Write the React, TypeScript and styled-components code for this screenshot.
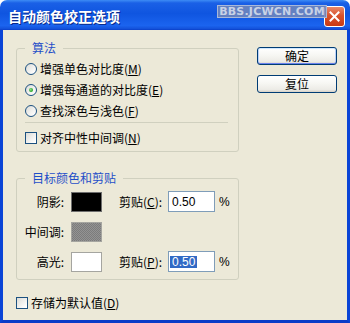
import styled, { createGlobalStyle } from "styled-components";

const GlobalStyle = createGlobalStyle`
  html, body {
    margin: 0;
    padding: 0;
    background: #ffffff;
  }
  body {
    font-family: "Noto Sans CJK SC", "Liberation Sans", sans-serif;
    font-size: 12px;
    color: #000;
  }
`;

export default function App(): JSX.Element {
  return (
    <>
      <GlobalStyle />
      <Window>
        <TitleBar>
          <Title>自动颜色校正选项</Title>
          <CloseButton>
            <svg width="11" height="11" viewBox="0 0 11 11">
              <path d="M1.5 1.5 L9.5 9.5 M9.5 1.5 L1.5 9.5" stroke="#fff" strokeWidth="2" strokeLinecap="square" />
            </svg>
          </CloseButton>
          <Watermark>BBS.JCWCN.COM</Watermark>
        </TitleBar>
        <Body>
          <Main>
            <LeftColumn>
              <AlgoGroup>
                <Legend>算法</Legend>
                <OptionRow>
                  <Radio $checked={false} />
                  <span>
                    增强单色对比度(<Key>M</Key>)
                  </span>
                </OptionRow>
                <OptionRow>
                  <Radio $checked />
                  <span>
                    增强每通道的对比度(<Key>E</Key>)
                  </span>
                </OptionRow>
                <OptionRow>
                  <Radio $checked={false} />
                  <span>
                    查找深色与浅色(<Key>F</Key>)
                  </span>
                </OptionRow>
                <Separator />
                <CheckRow>
                  <CheckBox />
                  <span>
                    对齐中性中间调(<Key>N</Key>)
                  </span>
                </CheckRow>
              </AlgoGroup>
              <TargetGroup>
                <Legend>目标颜色和剪贴</Legend>
                <SwatchRow>
                  <SwatchLabel>阴影:</SwatchLabel>
                  <Swatch $tone="dark" />
                  <ClipLabel>
                    剪贴(<Key>C</Key>):
                  </ClipLabel>
                  <NumberField>
                    <FieldText>0.50</FieldText>
                  </NumberField>
                  <Percent>%</Percent>
                </SwatchRow>
                <SwatchRow>
                  <SwatchLabel>中间调:</SwatchLabel>
                  <Swatch $tone="mid" />
                </SwatchRow>
                <SwatchRow>
                  <SwatchLabel>高光:</SwatchLabel>
                  <Swatch $tone="light" />
                  <ClipLabel>
                    剪贴(<Key>P</Key>):
                  </ClipLabel>
                  <NumberField>
                    <FieldText $selected>0.50</FieldText>
                  </NumberField>
                  <Percent>%</Percent>
                </SwatchRow>
              </TargetGroup>
            </LeftColumn>
            <ButtonColumn>
              <DialogButton $default>确定</DialogButton>
              <DialogButton>复位</DialogButton>
            </ButtonColumn>
          </Main>
          <FooterRow>
            <CheckBox />
            <span>
              存储为默认值(<Key>D</Key>)
            </span>
          </FooterRow>
        </Body>
      </Window>
    </>
  );
}

const Window = styled("div")`
  width: 350px;
  height: 323px;
  display: flex;
  flex-direction: column;
`;
const TitleBar = styled("div")`
  position: relative;
  height: 30px;
  flex: 0 0 30px;
  display: flex;
  align-items: center;
  padding-left: 8px;
  border-radius: 7px 7px 0 0;
  background: linear-gradient(
    180deg,
    #3d8cf5 0%,
    #1a60e6 10%,
    #0f55e0 45%,
    #1b64ef 85%,
    #1453dc 95%,
    #0a3fc8 100%
  );
  box-sizing: border-box;
`;
const Title = styled("div")`
  font-size: 14px;
  font-weight: bold;
  color: #ffffff;
  line-height: 16px;
  text-shadow: 1px 1px 0 #0a2a8a;
  margin-top: 1px;
`;
const CloseButton = styled("div")`
  margin-left: auto;
  margin-right: 5px;
  margin-top: 3px;
  width: 21px;
  height: 21px;
  box-sizing: border-box;
  border: 1px solid #ffffff;
  border-radius: 3px;
  background: linear-gradient(180deg, #e8896a 0%, #d9522d 45%, #c83a14 100%);
  display: flex;
  align-items: center;
  justify-content: center;
`;
const Watermark = styled("div")`
  position: absolute;
  left: 217px;
  top: 5px;
  width: 110px;
  height: 13px;
  box-sizing: border-box;
  border: 1px solid #a9b8d8;
  background: rgba(112, 134, 188, 0.88);
  color: #c8d2e6;
  font-family: "DejaVu Sans", "Liberation Sans", sans-serif;
  font-weight: bold;
  font-size: 11px;
  line-height: 11px;
  letter-spacing: 0.2px;
  text-align: center;
  overflow: hidden;
  white-space: nowrap;
`;
const Body = styled("div")`
  background: #ece9d8;
  border-left: 3px solid #0a44d6;
  border-right: 3px solid #0a44d6;
  border-bottom: 3px solid #0a3cc8;
  padding: 10px 10px 0 13px;
  box-sizing: border-box;
  flex: 0 0 293px;
  height: 293px;
`;
const Main = styled("div")`
  display: flex;
  gap: 18px;
`;
const LeftColumn = styled("div")`
  width: 223px;
  display: flex;
  flex-direction: column;
`;
const Group = styled("fieldset")`
  margin: 0;
  min-width: 0;
  border: 1px solid #d0d0bf;
  border-radius: 3px;
  box-sizing: border-box;
`;
const AlgoGroup = styled(Group)`
  padding: 2px 0 3px 0;
`;
const TargetGroup = styled(Group)`
  margin-top: 18px;
  padding: 4px 0 6px 0;
  display: flex;
  flex-direction: column;
  gap: 7px;
`;
const Legend = styled("legend")`
  margin-left: 8px;
  padding: 0 7px;
  color: #1f4fc8;
  font-size: 12px;
  line-height: 16px;
`;
const Key = styled("span")`
  text-decoration: underline;
`;
const OptionRow = styled("div")`
  height: 21px;
  display: flex;
  align-items: center;
  gap: 3px;
  padding-left: 8px;
  line-height: 14px;
`;
const CheckRow = styled(OptionRow)`
  height: 20px;
`;
const Radio = styled("span")<{ $checked: boolean }>`
  position: relative;
  width: 12px;
  height: 12px;
  flex: 0 0 12px;
  box-sizing: border-box;
  border: 1px solid #1c5180;
  border-radius: 50%;
  background: linear-gradient(135deg, #dcdcd7 0%, #ffffff 90%);
  &::after {
    content: "";
    display: ${(p) => (p.$checked ? "block" : "none")};
    position: absolute;
    left: 3px;
    top: 3px;
    width: 4px;
    height: 4px;
    border-radius: 50%;
    background: radial-gradient(circle at 40% 40%, #8be08b 0%, #21a121 70%);
  }
`;
const CheckBox = styled("span")`
  width: 12px;
  height: 12px;
  flex: 0 0 12px;
  box-sizing: border-box;
  border: 1px solid #1c5180;
  background: linear-gradient(135deg, #dcdcd7 0%, #ffffff 90%);
`;
const Separator = styled("div")`
  height: 1px;
  background: #d0d0bf;
  margin: 1px 10px 5px 8px;
`;
const SwatchRow = styled("div")`
  height: 23px;
  display: flex;
  align-items: center;
`;
const SwatchLabel = styled("div")`
  width: 47px;
  text-align: right;
  line-height: 14px;
`;
const Swatch = styled("div")<{ $tone: "dark" | "mid" | "light" }>`
  width: 31px;
  height: 20px;
  margin-left: 7px;
  box-sizing: border-box;
  border: 1px solid ${(p) => (p.$tone === "dark" ? "#6e6e6e" : "#a5a5a0")};
  background-color: ${(p) =>
    p.$tone === "dark" ? "#000000" : p.$tone === "mid" ? "#868686" : "#ffffff"};
  background-image: ${(p) =>
    p.$tone === "mid" ? "repeating-conic-gradient(#7c7c7c 0 25%, #939393 0 50%)" : "none"};
  background-size: 2px 2px;
`;
const ClipLabel = styled("div")`
  width: 49px;
  margin-left: 17px;
  line-height: 14px;
  white-space: nowrap;
`;
const NumberField = styled("div")`
  width: 47px;
  height: 21px;
  box-sizing: border-box;
  border: 1px solid #7f9db9;
  background: #ffffff;
  display: flex;
  align-items: center;
  padding-left: 1px;
`;
const FieldText = styled("span")<{ $selected?: boolean }>`
  font-family: "Liberation Sans", Arial, sans-serif;
  font-size: 12px;
  line-height: 12px;
  padding: 0 2px;
  background: ${(p) => (p.$selected ? "#316ac5" : "transparent")};
  color: ${(p) => (p.$selected ? "#ffffff" : "#000000")};
`;
const Percent = styled("div")`
  margin-left: 4px;
  font-family: "Liberation Sans", Arial, sans-serif;
  font-size: 12px;
`;
const ButtonColumn = styled("div")`
  margin-top: 7px;
  display: flex;
  flex-direction: column;
  gap: 10px;
`;
const DialogButton = styled("button")<{ $default?: boolean }>`
  width: 80px;
  height: 18px;
  padding: 0;
  box-sizing: border-box;
  border: 1px solid #003c74;
  border-radius: 3px;
  font-family: "Noto Sans CJK SC", sans-serif;
  font-size: 12px;
  line-height: 14px;
  color: #000;
  background: linear-gradient(180deg, #ffffff 0%, #f7f7f3 45%, #ecebe6 85%, #d6d0c5 100%);
  box-shadow: ${(p) =>
    p.$default
      ? "inset 0 1px 0 #cee7ff, inset 0 -1px 0 #6982ee, inset 1px 0 0 #b9d1fa, inset -1px 0 0 #b9d1fa"
      : "none"};
`;
const FooterRow = styled("div")`
  margin-top: 14px;
  height: 18px;
  display: flex;
  align-items: center;
  gap: 3px;
  line-height: 14px;
`;
